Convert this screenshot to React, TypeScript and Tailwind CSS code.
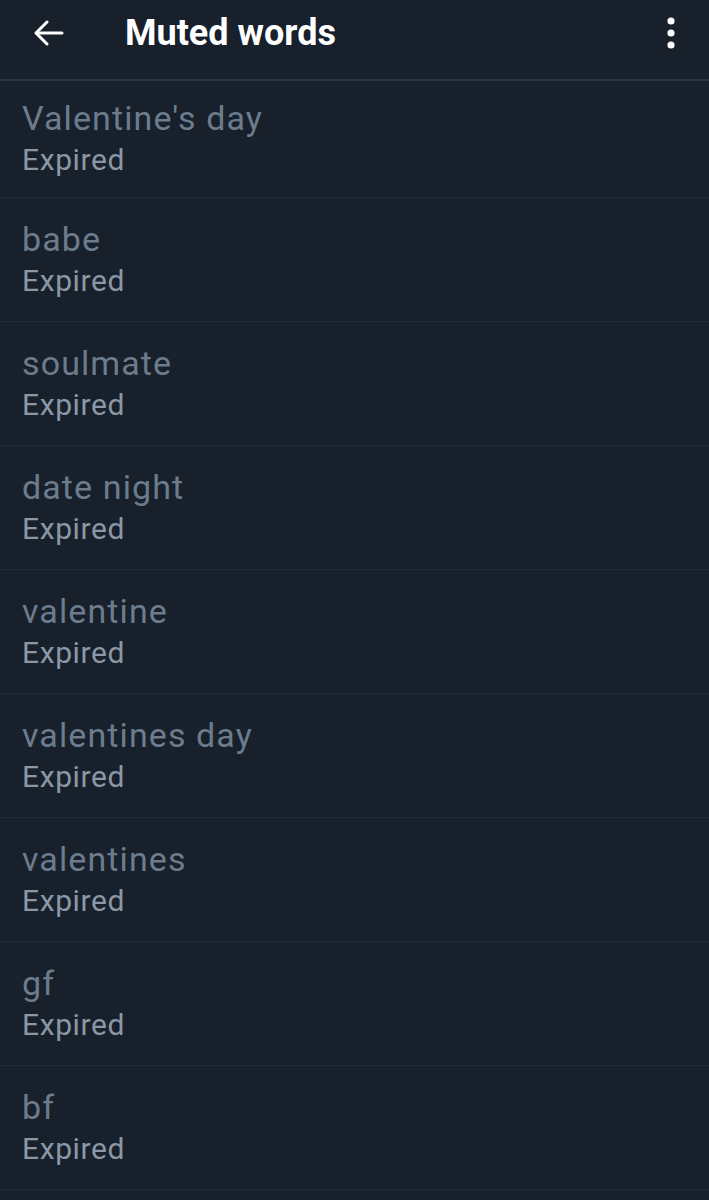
const words = [
  "Valentine's day",
  'babe',
  'soulmate',
  'date night',
  'valentine',
  'valentines day',
  'valentines',
  'gf',
  'bf',
];

function BackArrow() {
  return (
    <svg width="30" height="26" viewBox="0 0 30 26" fill="none" stroke="white" strokeWidth="3" strokeLinecap="round" strokeLinejoin="round">
      <path d="M28 13H3" />
      <path d="M13 2L2 13l11 11" />
    </svg>
  );
}

function MoreDots() {
  return (
    <svg width="10" height="32" viewBox="0 0 10 32" fill="white">
      <circle cx="5" cy="4" r="3.6" />
      <circle cx="5" cy="16" r="3.6" />
      <circle cx="5" cy="28" r="3.6" />
    </svg>
  );
}

export default function App() {
  return (
    <div className="min-h-[1200px] w-[709px] bg-[#17202b] font-['Roboto','Liberation_Sans',sans-serif] overflow-hidden">
      <header className="h-[81px] border-b-2 border-[#2a3541]">
        <div className="flex h-[66px] items-center">
          <div className="flex w-[125px] pl-[34px]">
            <BackArrow />
          </div>
          <h1 className="flex-1 text-[36px] font-bold text-white">Muted words</h1>
          <div className="pr-[33px]">
            <MoreDots />
          </div>
        </div>
      </header>
      <ul>
        {words.map((word, i) => (
          <li
            key={word}
            className={
              'flex flex-col justify-center border-b border-[#1f2a36] px-[22px] ' +
              (i === 0 ? 'h-[117px]' : 'h-[124px]')
            }
          >
            <span className="text-[34px] leading-[41px] tracking-[1.1px] text-[#6c7c8c]">{word}</span>
            <span className="text-[30px] leading-[41px] tracking-[0.6px] text-[#8a98a6]">Expired</span>
          </li>
        ))}
      </ul>
    </div>
  );
}
